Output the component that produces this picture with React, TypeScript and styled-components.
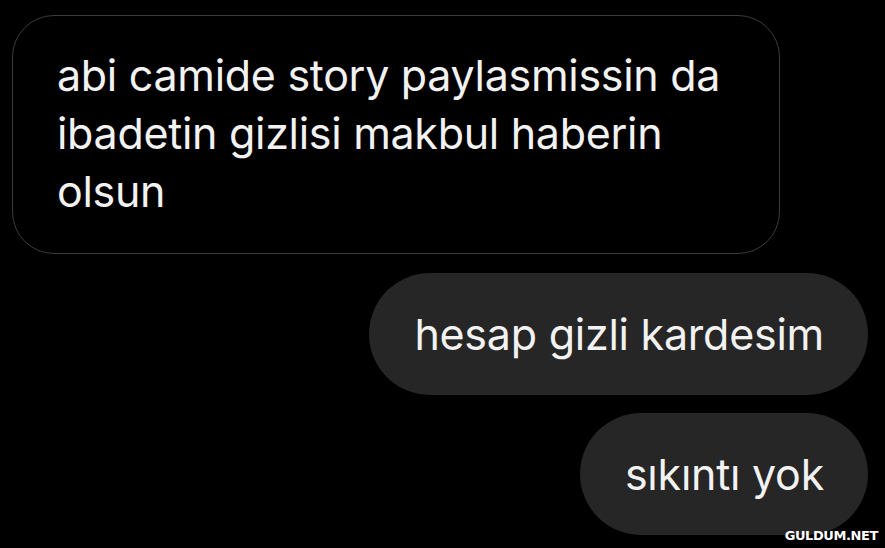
import React from "react";
import styled, { createGlobalStyle } from "styled-components";

const Global = createGlobalStyle`
  html, body { margin: 0; padding: 0; background: #000; }
  body { width: 885px; height: 548px; overflow: hidden; }
`;

const Screen = styled.div`
  position: relative;
  width: 885px;
  height: 548px;
  background: #000;
  box-sizing: border-box;
  padding: 15px 17px 0 12px;
  display: flex;
  flex-direction: column;
  font-family: Inter, "Noto Sans", sans-serif;
  color: #f2f2f2;
`;

const Received = styled.div`
  align-self: flex-start;
  width: 768px;
  height: 239px;
  box-sizing: border-box;
  border: 1.5px solid #3b3b3b;
  border-radius: 42px;
  padding: 30px 20px 0 44px;
  font-size: 43px;
  line-height: 58px;
  letter-spacing: -0.3px;
`;

const Sent = styled.div<{ $top: number }>`
  align-self: flex-end;
  margin-top: ${(p) => p.$top}px;
  height: 122px;
  box-sizing: border-box;
  background: #262626;
  border-radius: 61px;
  padding: 0 44px 0 45px;
  display: flex;
  align-items: center;
  font-size: 43px;
  letter-spacing: -0.25px;
`;

const Watermark = styled.div`
  position: absolute;
  right: 7px;
  bottom: 5px;
  font-family: "DejaVu Sans", sans-serif;
  font-weight: 700;
  font-size: 13px;
  color: #fff;
  letter-spacing: -0.4px;
`;

export default function App() {
  return (
    <>
      <Global />
      <Screen>
        <Received>
          abi camide story paylasmissin da
          <br />
          ibadetin gizlisi makbul haberin
          <br />
          olsun
        </Received>
        <Sent $top={19}>hesap gizli kardesim</Sent>
        <Sent $top={18}>sıkıntı yok</Sent>
        <Watermark>GULDUM.NET</Watermark>
      </Screen>
    </>
  );
}
